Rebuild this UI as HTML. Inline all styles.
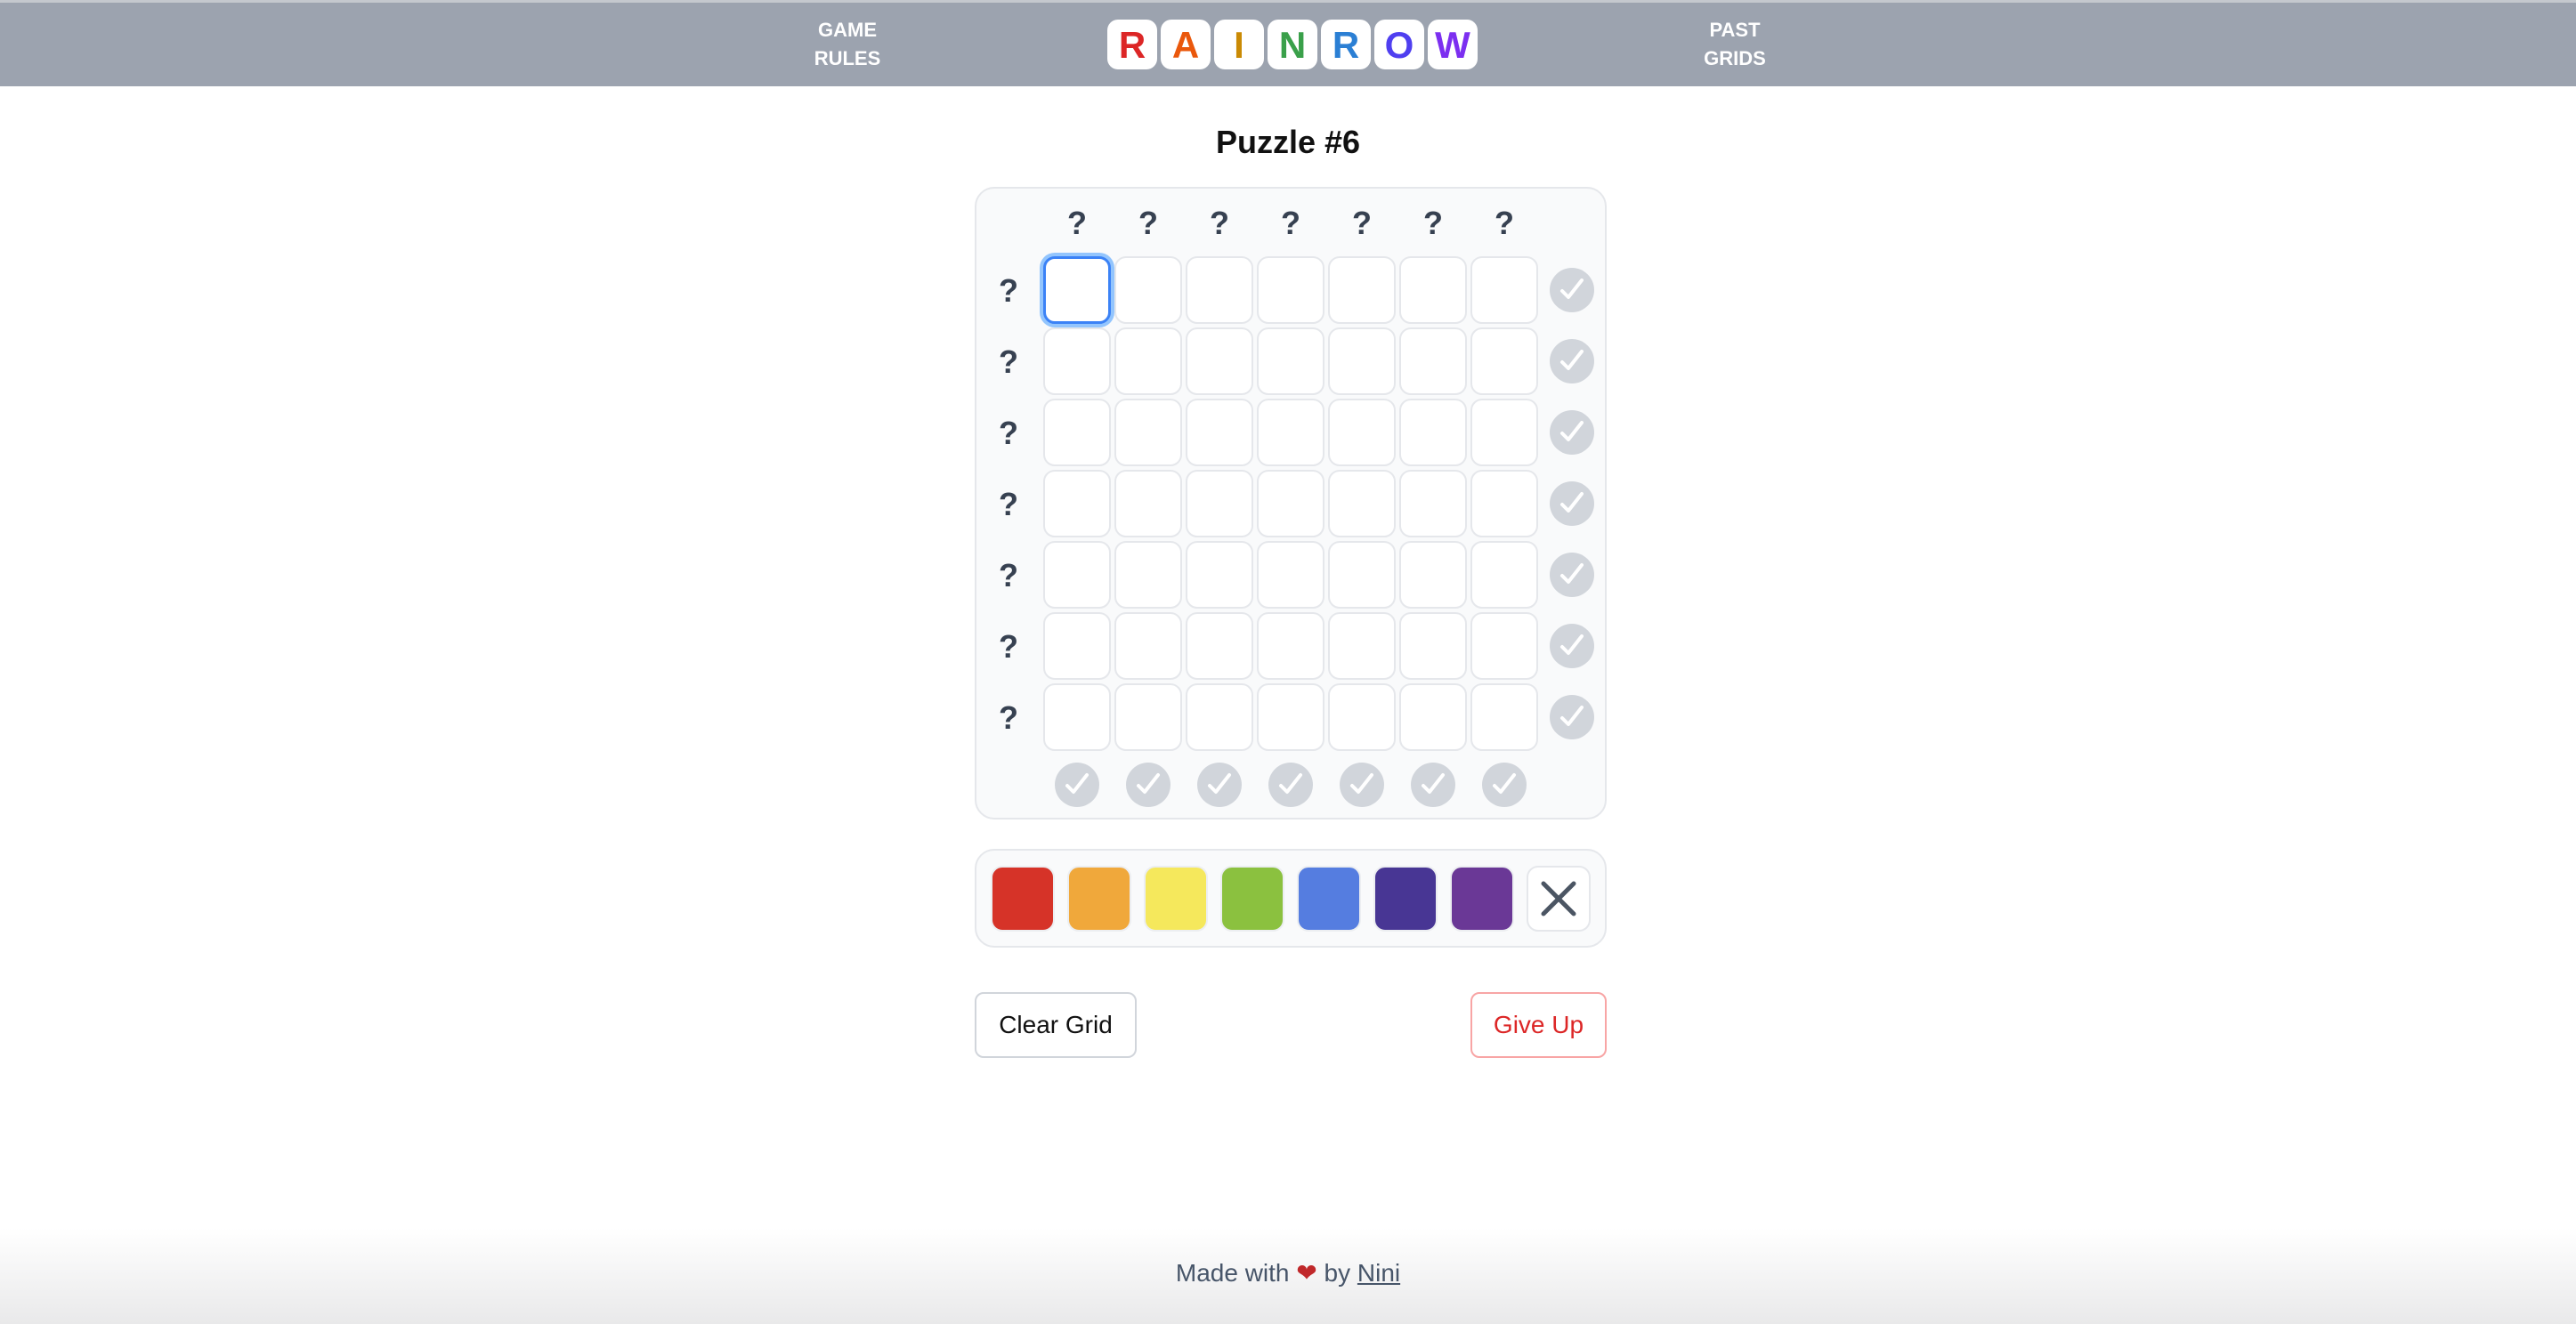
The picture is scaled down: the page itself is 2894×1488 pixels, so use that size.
<!DOCTYPE html>
<html><head><meta charset="utf-8"><style>
*{box-sizing:border-box;margin:0;padding:0}
body{width:2894px;height:1488px;position:relative;background:#fff;font-family:"Liberation Sans",sans-serif;overflow:hidden}
.hdr{position:absolute;left:0;top:0;width:2894px;height:97px;background:#9ca3af;border-top:3px solid #c4c8ce}
.nav{position:absolute;color:#fff;font-weight:bold;font-size:22px;line-height:32px;text-align:center;width:120px;top:18px}
.tile{position:absolute;top:22px;width:56px;height:56px;background:#fff;border-radius:12px;text-align:center;font-weight:bold;font-size:42px;line-height:58px}
.title{position:absolute;top:139px;left:0;width:2894px;text-align:center;font-size:36px;font-weight:bold;color:#111}
.panel{position:absolute;left:1095px;width:710px;background:#f9fafb;border:2px solid #e5e7eb;border-radius:22px}
.q{position:absolute;font-weight:bold;font-size:36px;color:#374151;width:40px;text-align:center;line-height:40px}
.cell{position:absolute;width:76px;height:76px;background:#fff;border:2px solid #e5e7eb;border-radius:13px}
.chk{position:absolute;width:50px;height:50px;border-radius:50%;background:#d1d5db}
.chk svg{position:absolute;left:0;top:0}
.sw{position:absolute;top:973px;width:72px;height:74px;border-radius:13px;border:2px solid #eceef1}
.btn{position:absolute;top:1115px;height:74px;border-radius:10px;background:#fff;font-size:28px;line-height:70px;text-align:center}
</style></head><body>
<div class="hdr"></div>
<div class="nav" style="left:892px">GAME<br>RULES</div>
<div class="nav" style="left:1889px">PAST<br>GRIDS</div>
<div class="tile" style="left:1244px;color:#dc2626">R</div>
<div class="tile" style="left:1304px;color:#ea580c">A</div>
<div class="tile" style="left:1364px;color:#ca8a04">I</div>
<div class="tile" style="left:1424px;color:#3aa04a">N</div>
<div class="tile" style="left:1484px;color:#2b7fd4">R</div>
<div class="tile" style="left:1544px;color:#4f3ff0">O</div>
<div class="tile" style="left:1604px;color:#7c2ff0">W</div>
<div class="title">Puzzle #6</div>
<div class="panel" style="top:210px;height:711px"></div>
<div class="panel" style="top:954px;height:111px"></div>
<div id="g"></div>
<div class="sw" style="left:1113px;background:#d63328"></div>
<div class="sw" style="left:1199px;background:#f0a83b"></div>
<div class="sw" style="left:1285px;background:#f5e85c"></div>
<div class="sw" style="left:1371px;background:#8bc13f"></div>
<div class="sw" style="left:1457px;background:#557de0"></div>
<div class="sw" style="left:1543px;background:#483694"></div>
<div class="sw" style="left:1629px;background:#6a3896"></div>
<div class="sw" style="left:1715px;background:#fff;border-color:#e5e7eb"><svg width="68" height="70" viewBox="0 0 68 70"><path d="M17 18L51 52M51 18L17 52" stroke="#4b5563" stroke-width="5" stroke-linecap="round"/></svg></div>
<div class="btn" style="left:1095px;width:182px;border:2px solid #d1d5db;color:#111">Clear Grid</div>
<div class="btn" style="left:1652px;width:153px;border:2px solid #f8a5a5;color:#dc2626">Give Up</div>
<div style="position:absolute;left:0;top:1380px;width:2894px;height:108px;background:linear-gradient(#fff,#e9e9ea)"></div>
<div style="position:absolute;left:0;top:1411px;width:2894px;text-align:center;font-size:28px;color:#475569;line-height:40px">Made with <span style="color:#c0282a">&#10084;</span> by <u>Nini</u></div>
<script>
var g=document.getElementById('g'),h='';
var ck='<svg width="50" height="50" viewBox="0 0 50 50"><path d="M14 26L21 33L36 14" fill="none" stroke="#fff" stroke-width="4" stroke-linecap="round" stroke-linejoin="round"/></svg>';
for(var i=0;i<7;i++){
 var x=1172+i*80;
 h+='<div class="q" style="left:'+(x+18)+'px;top:231px">?</div>';
 h+='<div class="chk" style="left:'+(x+13)+'px;top:857px">'+ck+'</div>';
 var y=288+i*80;
 h+='<div class="q" style="left:1113px;top:'+(y+19)+'px">?</div>';
 h+='<div class="chk" style="left:1741px;top:'+(y+13)+'px">'+ck+'</div>';
 for(var j=0;j<7;j++){
  var s=(i==0&&j==0)?'border:3px solid #3b82f6;box-shadow:0 0 0 4px #93c5fd;':'';
  h+='<div class="cell" style="left:'+(1172+j*80)+'px;top:'+y+'px;'+s+'"></div>';
 }
}
g.innerHTML=h;
</script>
</body></html>
